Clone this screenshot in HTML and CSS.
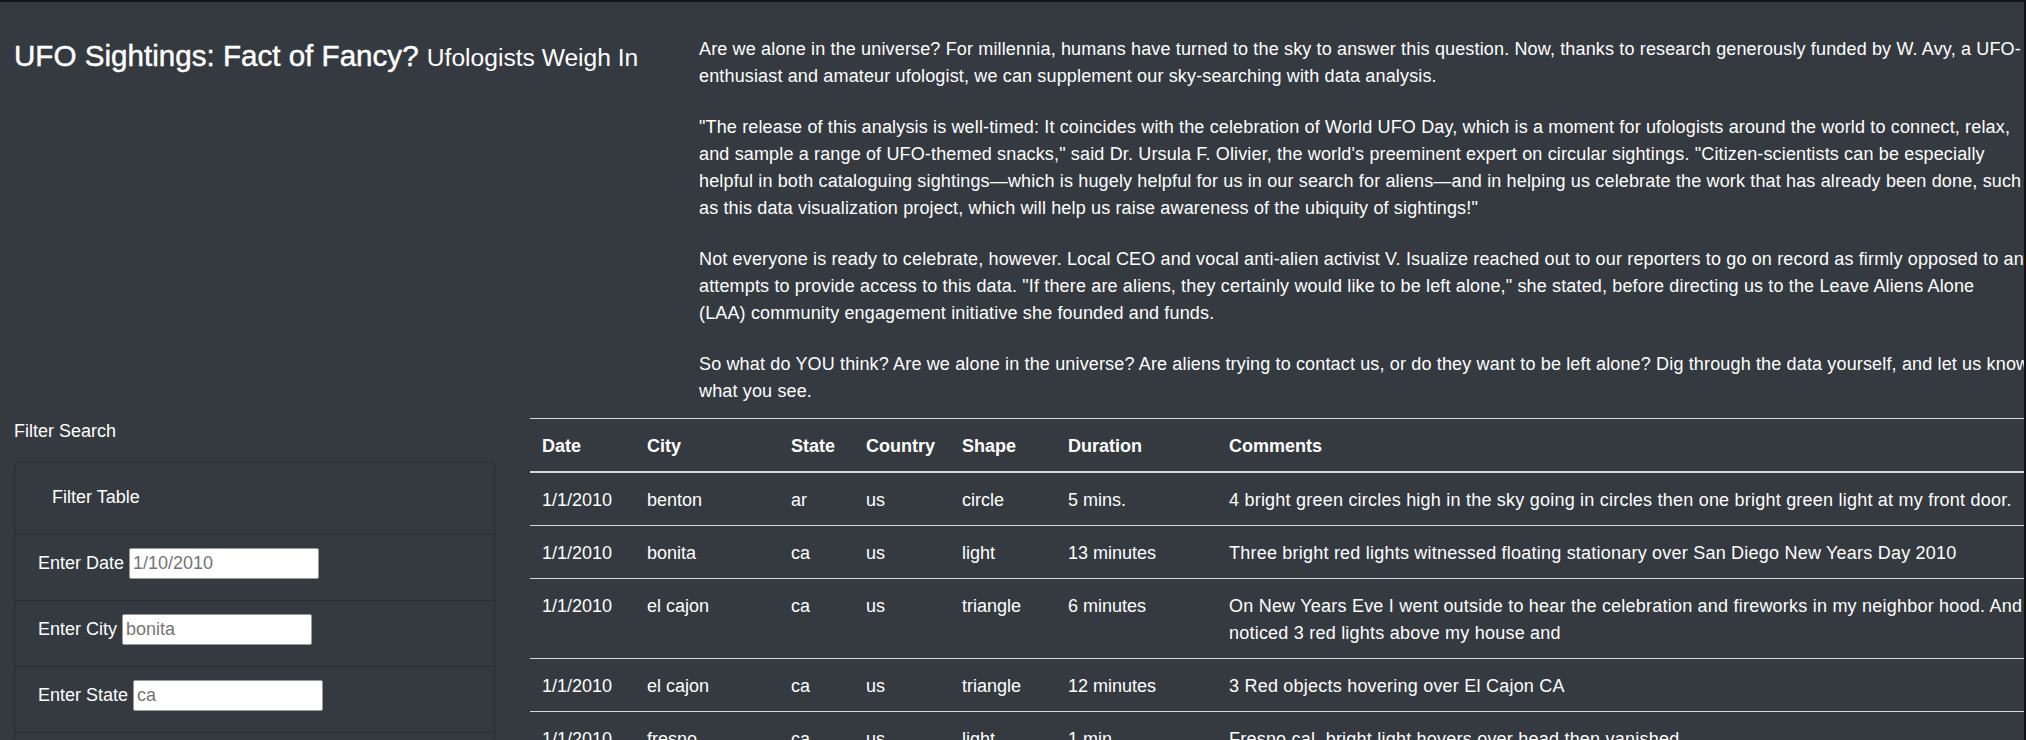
FILE: index.html
```html
<!DOCTYPE html>
<html lang="en">
<head>
<meta charset="utf-8">
<title>UFO Sightings</title>
<link rel="stylesheet" href="styles.css">
</head>
<body>
<div class="page">
  <header class="top">
    <div class="title-col">
      <h1 class="title">UFO Sightings: Fact of Fancy? <small class="subtitle">Ufologists Weigh In</small></h1>
    </div>
    <div class="text-col">
      <p>Are we alone in the universe? For millennia, humans have turned to the sky to answer this question. Now, thanks to research generously funded by W. Avy, a UFO-<br>enthusiast and amateur ufologist, we can supplement our sky-searching with data analysis.</p>
      <p>"The release of this analysis is well-timed: It coincides with the celebration of World UFO Day, which is a moment for ufologists around the world to connect, relax,<br>and sample a range of UFO-themed snacks," said Dr. Ursula F. Olivier, the world's preeminent expert on circular sightings. "Citizen-scientists can be especially<br>helpful in both cataloguing sightings—which is hugely helpful for us in our search for aliens—and in helping us celebrate the work that has already been done, such<br>as this data visualization project, which will help us raise awareness of the ubiquity of sightings!"</p>
      <p>Not everyone is ready to celebrate, however. Local CEO and vocal anti-alien activist V. Isualize reached out to our reporters to go on record as firmly opposed to any<br>attempts to provide access to this data. "If there are aliens, they certainly would like to be left alone," she stated, before directing us to the Leave Aliens Alone<br>(LAA) community engagement initiative she founded and funds.</p>
      <p>So what do YOU think? Are we alone in the universe? Are aliens trying to contact us, or do they want to be left alone? Dig through the data yourself, and let us know<br>what you see.</p>
    </div>
  </header>

  <main class="bottom">
    <aside class="filter-col">
      <div class="filter-title">Filter Search</div>
      <form class="panel">
        <div class="panel-head">Filter Table</div>
        <ul class="filters">
          <li class="filter"><label for="datetime">Enter Date</label><input id="datetime" type="text" placeholder="1/10/2010"></li>
          <li class="filter"><label for="city">Enter City</label><input id="city" type="text" placeholder="bonita"></li>
          <li class="filter"><label for="state">Enter State</label><input id="state" type="text" placeholder="ca"></li>
          <li class="filter"><label for="country">Enter Country</label><input id="country" type="text" placeholder="us"></li>
          <li class="filter"><label for="shape">Enter Shape</label><input id="shape" type="text" placeholder="circle"></li>
        </ul>
      </form>
    </aside>

    <section class="table-col">
      <table class="ufo-table">
        <colgroup>
          <col class="c-date"><col class="c-city"><col class="c-state"><col class="c-country"><col class="c-shape"><col class="c-duration"><col class="c-comments">
        </colgroup>
        <thead>
          <tr><th>Date</th><th>City</th><th>State</th><th>Country</th><th>Shape</th><th>Duration</th><th>Comments</th></tr>
        </thead>
        <tbody>
          <tr><td>1/1/2010</td><td>benton</td><td>ar</td><td>us</td><td>circle</td><td>5 mins.</td><td class="comment">4 bright green circles high in the sky going in circles then one bright green light at my front door.</td></tr>
          <tr><td>1/1/2010</td><td>bonita</td><td>ca</td><td>us</td><td>light</td><td>13 minutes</td><td class="comment">Three bright red lights witnessed floating stationary over San Diego New Years Day 2010</td></tr>
          <tr><td>1/1/2010</td><td>el cajon</td><td>ca</td><td>us</td><td>triangle</td><td>6 minutes</td><td class="comment">On New Years Eve I went outside to hear the celebration and fireworks in my neighbor hood. And<br>noticed 3 red lights above my house and</td></tr>
          <tr><td>1/1/2010</td><td>el cajon</td><td>ca</td><td>us</td><td>triangle</td><td>12 minutes</td><td class="comment">3 Red objects hovering over El Cajon CA</td></tr>
          <tr><td>1/1/2010</td><td>fresno</td><td>ca</td><td>us</td><td>light</td><td>1 min</td><td class="comment">Fresno cal. bright light hovers over head then vanished.</td></tr>
          <tr><td>1/1/2010</td><td>la mesa</td><td>ca</td><td>us</td><td>fireball</td><td>5 minutes</td><td class="comment">Orange light moving slowly across the sky</td></tr>
        </tbody>
      </table>
    </section>
  </main>
</div>
</body>
</html>
```

FILE: styles.css
```css
* {
  box-sizing: border-box;
}

html,
body {
  margin: 0;
  padding: 0;
  background: #343a40;
}

body {
  font-family: "Liberation Sans", Arial, sans-serif;
  font-size: 18px;
  line-height: 27px;
  color: #ffffff;
}

.page {
  width: 2026px;
  height: 740px;
  overflow: hidden;
  background: #343a40;
  border-top: 2px solid #111318;
  border-right: 2px solid #101216;
}

/* ---------- top section ---------- */
.top {
  display: flex;
  padding: 34px 0 13px 14px;
}

.title-col {
  flex: 0 0 685px;
}

.title {
  margin: 2px 0 0;
  font-size: 29.6px;
  line-height: 36px;
  font-weight: 400;
  white-space: nowrap;
  -webkit-text-stroke: 0.45px #ffffff;
}

.subtitle {
  font-size: 24.6px;
  font-weight: 400;
  -webkit-text-stroke: 0;
}

.text-col {
  flex: 1 1 auto;
  min-width: 0;
}

.text-col p {
  margin: 0 0 24px;
  white-space: nowrap;
  letter-spacing: 0.15px;
}

.text-col p:last-child {
  margin-bottom: 0;
}

/* ---------- bottom section ---------- */
.bottom {
  display: flex;
  align-items: flex-start;
  padding-left: 14px;
  gap: 35px;
}

.filter-col {
  flex: 0 0 481px;
}

.filter-title {
  line-height: 27px;
}

.panel {
  margin: 17px 0 0;
  border: 1px solid #2a2e33;
  border-radius: 4px;
}

.panel-head {
  padding: 21px 37px 23px;
  line-height: 27px;
}

.filters {
  list-style: none;
  margin: 0;
  padding: 0;
}

.filter {
  display: flex;
  align-items: center;
  border-top: 1px solid #2a2e33;
  padding: 13px 23px 21px;
}

.filter label {
  white-space: nowrap;
}

.filter input {
  width: 190px;
  height: 31px;
  margin-left: 5px;
  padding: 0 3px;
  border: 1px solid #9a9a9a;
  border-radius: 2px;
  background: #ffffff;
  font-family: "Liberation Sans", Arial, sans-serif;
  font-size: 18px;
  color: #333333;
}

.filter input::placeholder {
  color: #757575;
}

.table-col {
  flex: 0 0 auto;
}

.ufo-table {
  width: 1517px;
  table-layout: fixed;
  border-collapse: collapse;
  color: #ffffff;
}

.c-date { width: 105px; }
.c-city { width: 144px; }
.c-state { width: 75px; }
.c-country { width: 96px; }
.c-shape { width: 106px; }
.c-duration { width: 161px; }
.c-comments { width: 830px; }

.ufo-table th,
.ufo-table td {
  padding: 14px 12px 11px;
  line-height: 27px;
  text-align: left;
  vertical-align: top;
  border-top: 1px solid #d5d8db;
  white-space: nowrap;
}

.ufo-table th {
  font-weight: 700;
  border-bottom: 2px solid #d5d8db;
}

.ufo-table .comment {
  letter-spacing: 0.22px;
}
```
